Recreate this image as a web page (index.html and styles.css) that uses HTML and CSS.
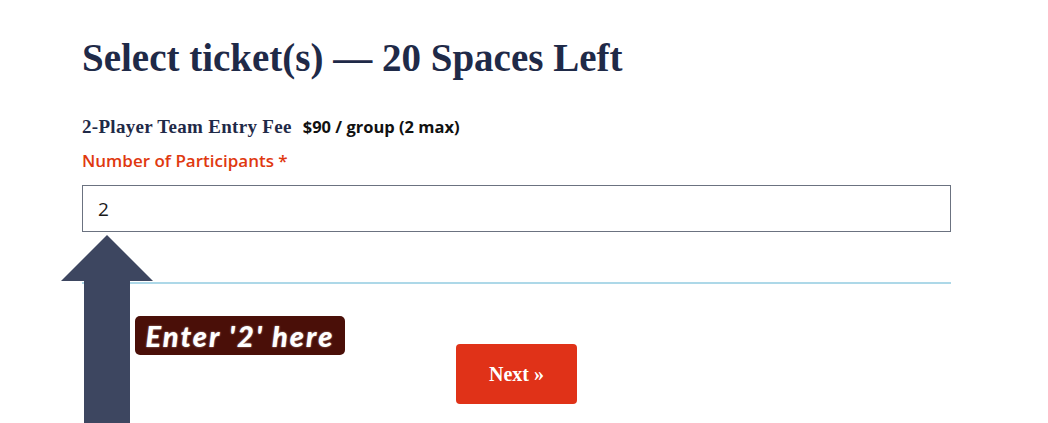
FILE: index.html
```html
<!DOCTYPE html>
<html lang="en">
<head>
    <meta charset="UTF-8">
    <meta name="viewport" content="width=device-width, initial-scale=1.0">
    <title>Select tickets</title>
    <link rel="stylesheet" href="styles.css">
</head>
<body>
    <div class="ticket-form">
        <h1 class="ticket-title">Select ticket(s) &mdash; 20 Spaces Left</h1>

        <div class="ticket-row">
            <span class="ticket-name">2-Player Team Entry Fee</span>
            <span class="ticket-price">$90 / group (2 max)</span>
        </div>

        <label class="field-label" for="participants">Number of Participants *</label>
        <input class="field-input" id="participants" type="text" value="2">

        <hr class="form-divider">

        <div class="form-actions">
            <button class="next-btn" type="button">Next &raquo;</button>
        </div>
    </div>

    <!-- Annotation overlay -->
    <svg class="hint-arrow" viewBox="0 0 92 188" aria-hidden="true">
        <polygon points="46,0 92,46 69,46 69,188 23,188 23,46 0,46" fill="#3d4660"></polygon>
    </svg>
    <div class="hint-label">Enter '2' here</div>
</body>
</html>
```

FILE: styles.css
```css
body {
    margin: 0;
    background: #ffffff;
    font-family: "Open Sans", Lato, sans-serif;
    color: #1a1a1a;
}

.ticket-form {
    width: 869px;
    margin-left: 82px;
    padding-top: 34px;
}

.ticket-title {
    margin: 0 0 33px;
    font-family: "Liberation Serif", serif;
    font-weight: bold;
    font-size: 39px;
    line-height: 48px;
    color: #1f2a48;
}

.ticket-row {
    display: flex;
    align-items: baseline;
    gap: 11px;
    margin-bottom: 12px;
}

.ticket-name {
    font-family: "Liberation Serif", serif;
    font-weight: bold;
    font-size: 19px;
    letter-spacing: 0.3px;
    color: #1f2a48;
}

.ticket-price {
    font-weight: 700;
    font-size: 16.5px;
    color: #111111;
}

.field-label {
    display: block;
    font-weight: 600;
    font-size: 17px;
    line-height: 22px;
    color: #e0380f;
    margin-bottom: 13px;
}

.field-input {
    display: block;
    box-sizing: border-box;
    width: 100%;
    height: 47px;
    margin: 0;
    padding: 0 15px;
    border: 1px solid #6b7280;
    border-radius: 0;
    font-family: "Open Sans", sans-serif;
    font-size: 19px;
    color: #1a1a1a;
}

.form-divider {
    margin: 50px 0 0;
    border: none;
    height: 2px;
    background: #add8e8;
}

.form-actions {
    display: flex;
    justify-content: center;
    padding-top: 60px;
}

.next-btn {
    width: 121px;
    height: 60px;
    border: none;
    border-radius: 4px;
    background: #e03218;
    color: #ffffff;
    font-family: "Liberation Serif", serif;
    font-weight: bold;
    font-size: 20px;
    cursor: pointer;
}

.hint-arrow {
    position: absolute;
    left: 61px;
    top: 235px;
    width: 92px;
    height: 188px;
}

.hint-label {
    position: absolute;
    left: 135px;
    top: 316px;
    width: 210px;
    height: 39px;
    box-sizing: border-box;
    background: #4a0f08;
    border-radius: 5px;
    color: #ffffff;
    font-family: Lato, sans-serif;
    font-weight: 900;
    font-style: italic;
    font-size: 29px;
    letter-spacing: 2px;
    line-height: 39px;
    text-align: center;
    text-shadow: 0 0 2px rgba(255, 255, 255, 0.6);
}
```
